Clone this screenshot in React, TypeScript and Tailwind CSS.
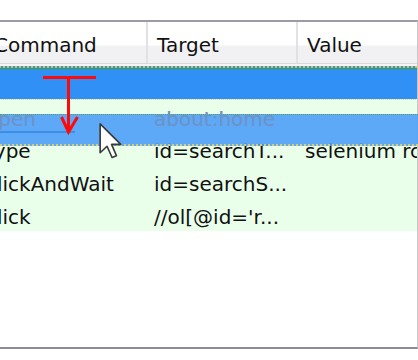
import React from "react";

const font = { fontFamily: '"DejaVu Sans", "Open Sans", sans-serif' };

function Cell({ w, children, cls = "" }: { w: string; children?: React.ReactNode; cls?: string }) {
  return (
    <div className={`${w} shrink-0 overflow-hidden whitespace-nowrap ${cls}`}>{children}</div>
  );
}

export default function App() {
  const rows = [
    { c: "type", t: "id=searchT...", v: "selenium rc" },
    { c: "clickAndWait", t: "id=searchS...", v: "" },
    { c: "click", t: "//ol[@id='r...", v: "" },
  ];
  return (
    <div className="relative w-[418px] h-[360px] bg-white overflow-hidden" style={font}>
      <div className="mt-[20px] w-[418px] h-[329px] border-t-2 border-b-2 border-r border-t-[#9c9ca4] border-b-[#8c8c98] border-r-[#c8c8cc] overflow-hidden">
        <div className="-ml-[12px] w-[440px] text-[20px] text-[#111]">
          {/* header */}
          <div className="flex h-[42px] border-b border-[#d8d8dc] bg-[linear-gradient(#ffffff_0%,#ffffff_55%,#f1f1f3_60%,#f1f1f3_100%)]">
            <div className="w-[160px] shrink-0 pl-[6px] leading-[42px] pt-[2px] border-r-2 border-[#e2e2e6]">Command</div>
            <div className="w-[150px] shrink-0 pl-[9px] leading-[42px] pt-[2px] border-r-2 border-[#e2e2e6]">Target</div>
            <div className="flex-1 pl-[9px] leading-[42px] pt-[2px]">Value</div>
          </div>
          <div className="h-[2px] bg-[#f4f4f6]" />
          {/* selected empty row */}
          <div className="h-[33px] bg-[#3090f6] border-t-2 border-dotted border-[#d8c840] shadow-[inset_0_1px_0_#3a9a3a]" />
          {/* open row */}
          <div className="flex h-[33px] bg-[#eaffea] leading-[33px] pt-[3px] text-[#7f9cc0] border-t border-dotted border-[#e0d890]">
            <Cell w="w-[160px]" cls="indent-[-2px]">open</Cell>
            <Cell w="w-[150px]" cls="pl-[6px]">about:home</Cell>
            <Cell w="flex-1" />
          </div>
          {rows.map((r) => (
            <div key={r.c} className="flex h-[33px] bg-[#eaffea] leading-[33px] pt-[3px]">
              <Cell w="w-[160px]" cls="indent-[-2px]">{r.c}</Cell>
              <Cell w="w-[150px]" cls="pl-[6px]">{r.t}</Cell>
              <Cell w="flex-1" cls="pl-[7px]">{r.v}</Cell>
            </div>
          ))}
        </div>
      </div>

      {/* drag ghost row */}
      <div className="absolute left-0 top-[114px] w-[418px] h-[32px] bg-[rgba(78,160,248,0.9)] border-t border-[#5aa060] border-b-2 border-b-[#d8d070] border-dotted text-[20px] text-[#6f93c4] overflow-visible">
        <div className="-ml-[12px] -mt-[10px] flex leading-[29px] whitespace-nowrap">
          <div className="w-[160px] indent-[-2px]">open</div>
          <div className="w-[150px] pl-[6px]">about:home</div>
        </div>
      </div>
      <div className="absolute left-0 top-[131px] w-[75px] h-[2px] bg-[#3f8ee6]" />

      {/* red arrow */}
      <svg className="absolute left-0 top-0" width="418" height="360" viewBox="0 0 418 360">
        <line x1="43" y1="77.5" x2="96" y2="77.5" stroke="#ff0a0a" strokeWidth="3" />
        <line x1="68.5" y1="77" x2="68.5" y2="131" stroke="#ff0a0a" strokeWidth="3" />
        <polyline points="61.5,117 68.5,132 77.5,117" fill="none" stroke="#ff0a0a" strokeWidth="3" />
      </svg>

      {/* mouse cursor */}
      <svg className="absolute left-[98px] top-[122px]" width="26" height="38" viewBox="0 0 14 21">
        <path
          d="M1 1 L1 17 L4.8 13.4 L7.6 19.6 L10 18.6 L7.3 12.4 L12.4 12.4 Z"
          fill="#ffffff"
          stroke="#3a3a3a"
          strokeWidth="0.9"
          strokeLinejoin="round"
        />
      </svg>
    </div>
  );
}
